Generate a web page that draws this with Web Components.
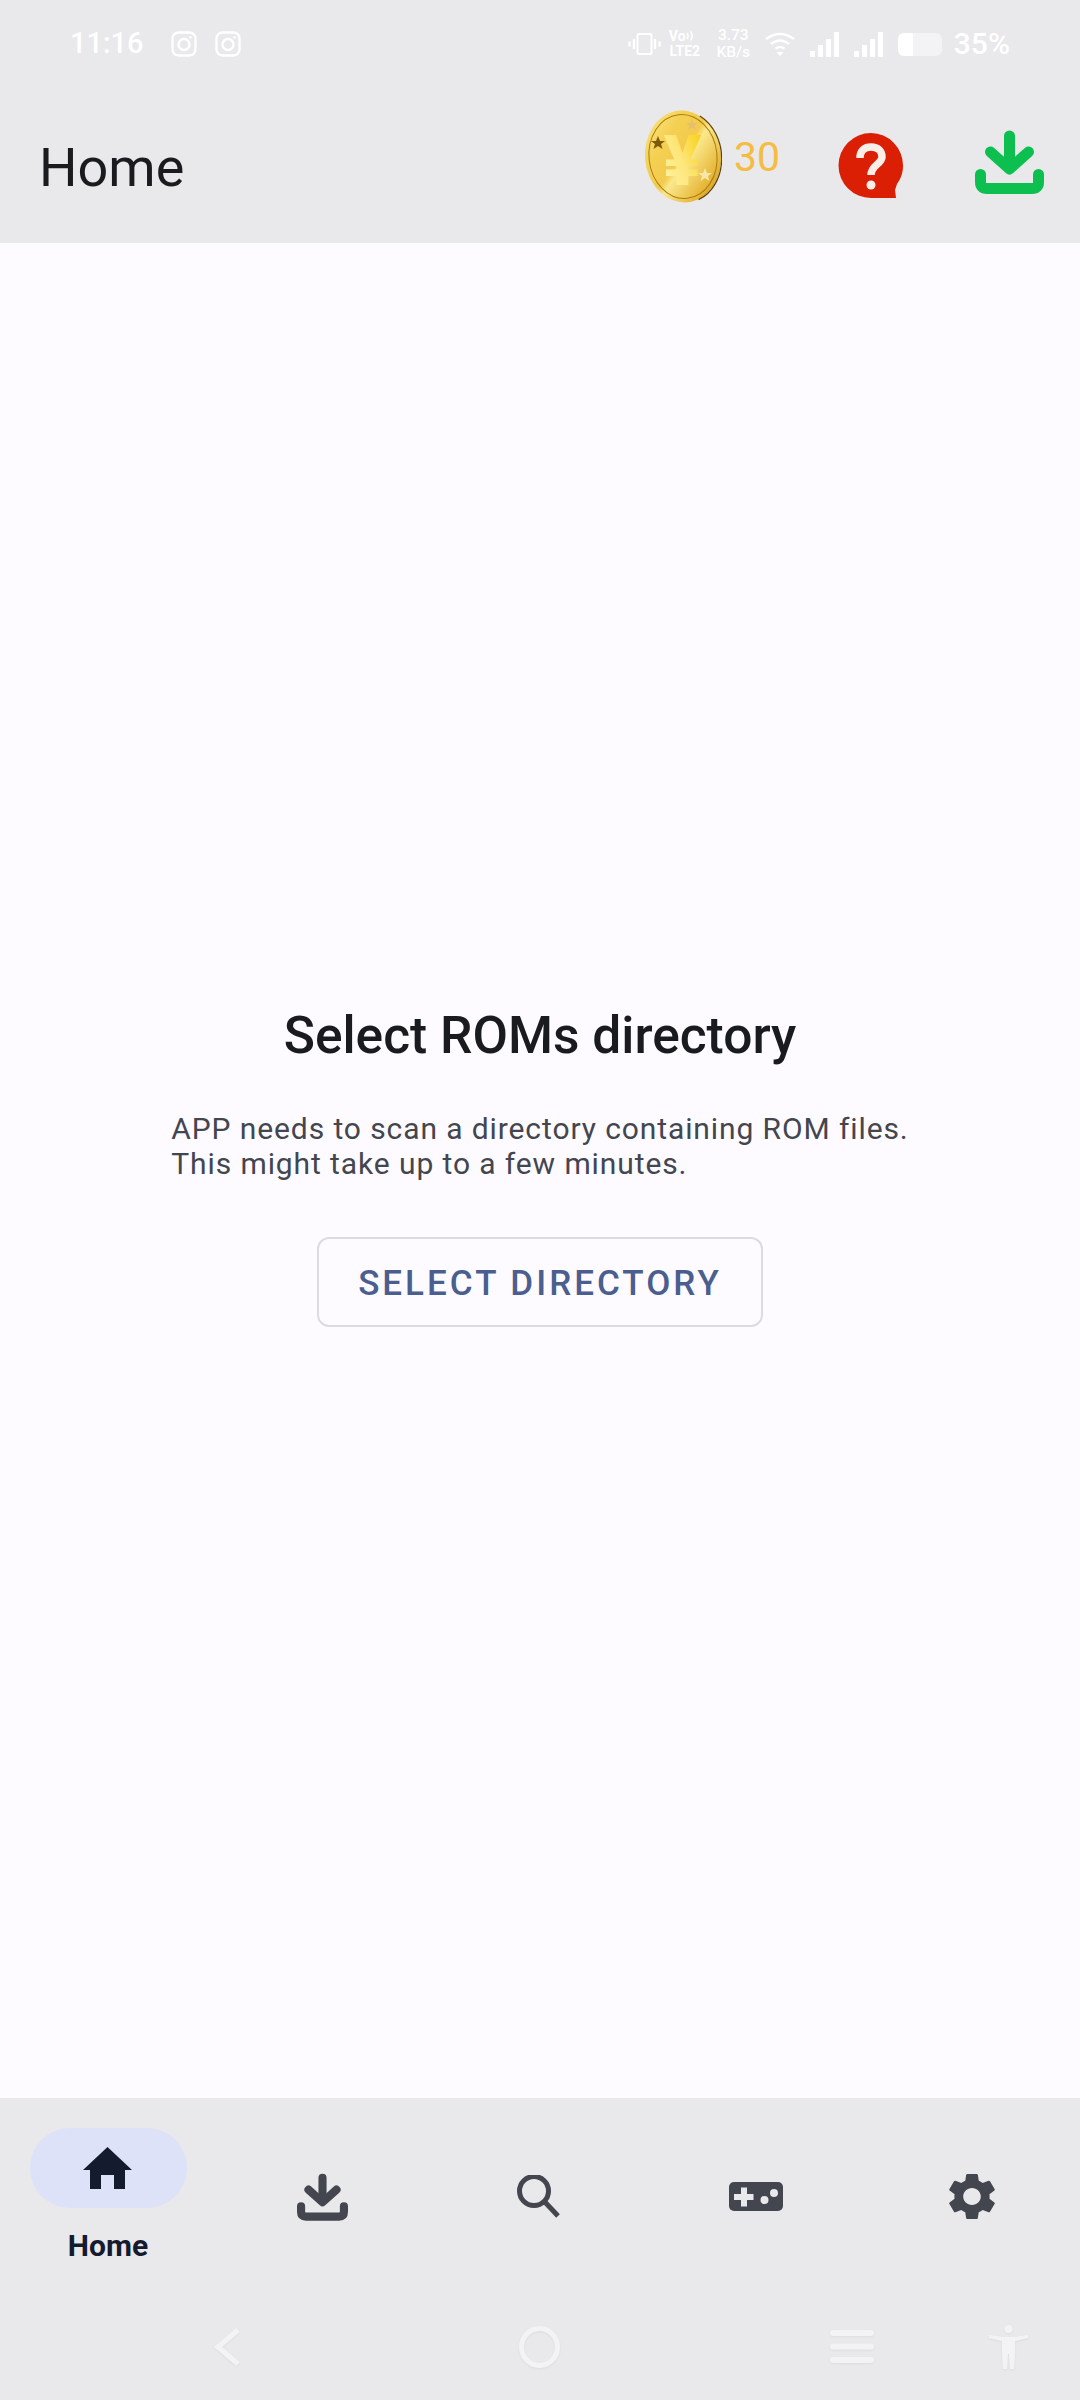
<!DOCTYPE html>
<html>
<head>
<meta charset="utf-8">
<title>Home</title>
<style>
html, body { margin: 0; padding: 0; }
body { width: 1080px; height: 2400px; background: #fdfbff; font-family: Roboto, "Liberation Sans", sans-serif; }
main-page { height: 2400px; }
</style>
</head>
<body>
<main-page>
  <top-header slot="top" title-text="Home" coins="30"></top-header>
  <empty-state heading="Select ROMs directory" action="SELECT DIRECTORY">
    APP needs to scan a directory containing ROM files.<br>This might take up to a few minutes.
  </empty-state>
  <bottom-area slot="bottom">
    <nav-item icon="home" label="Home" active></nav-item>
    <nav-item icon="download"></nav-item>
    <nav-item icon="search"></nav-item>
    <nav-item icon="gamepad"></nav-item>
    <nav-item icon="settings"></nav-item>
  </bottom-area>
</main-page>

<script>
"use strict";
const GEAR = "M19.14 12.94c.04-.3.06-.61.06-.94 0-.32-.02-.64-.07-.94l2.03-1.58c.18-.14.23-.41.12-.61l-1.92-3.32c-.12-.22-.37-.29-.59-.22l-2.39.96c-.5-.38-1.03-.7-1.62-.94l-.36-2.54c-.04-.24-.24-.41-.48-.41h-3.84c-.24 0-.43.17-.47.41l-.36 2.54c-.59.24-1.13.57-1.62.94l-2.39-.96c-.22-.08-.47 0-.59.22L2.74 8.87c-.12.21-.08.47.12.61l2.03 1.58c-.05.3-.09.63-.09.94s.02.64.07.94l-2.03 1.58c-.18.14-.23.41-.12.61l1.92 3.32c.12.22.37.29.59.22l2.39-.96c.5.38 1.03.7 1.62.94l.36 2.54c.05.24.24.41.48.41h3.84c.24 0 .44-.17.47-.41l.36-2.54c.59-.24 1.13-.56 1.62-.94l2.39.96c.22.08.47 0 .59-.22l1.92-3.32c.12-.22.07-.47-.12-.61l-2.01-1.58zM12 15.6c-1.98 0-3.6-1.62-3.6-3.6s1.62-3.6 3.6-3.6 3.6 1.62 3.6 3.6-1.62 3.6-3.6 3.6z";

function downloadSvg(w, h, color, extra = "") {
    return `<svg ${extra} width="${w}" height="${h}" viewBox="0 0 69 64" fill="none" stroke="${color}" stroke-width="11" stroke-linecap="round" stroke-linejoin="round">
        <path d="M34.500 6V36"/><path d="M15.500 22L34.500 39L53.500 22"/>
        <path d="M5.500 44.500V52Q5.500 58.500 12 58.500H57Q63.500 58.500 63.500 52V44.500"/>
    </svg>`;
}

const NAV_ICONS = {
    home: `<svg style="margin-left:-2px" width="49" height="42" viewBox="0 0 49 42"><path fill="#141b2f" d="M24.500 0L49 23H42V42H31V28H18V42H7V23H0Z"/></svg>`,
    download: downloadSvg(51, 48, "#44464f", 'style="margin-left:-3px"'),
    search: `<svg style="margin-left:-3px" width="43" height="43" viewBox="0 0 43 43" fill="none" stroke="#44464f" stroke-width="5"><circle cx="17" cy="16" r="14.500"/><path d="M27 26L41 41"/></svg>`,
    gamepad: `<svg width="54" height="29" viewBox="0 0 54 29"><rect width="54" height="29" rx="5" fill="#44464f"/><path fill="#e9e8eb" d="M12 5.500h6v6.500h6.500v6H18v6.500h-6V18H5v-6h7z"/><circle cx="35.500" cy="18" r="4" fill="#e9e8eb"/><circle cx="45" cy="11" r="4" fill="#e9e8eb"/></svg>`,
    settings: `<svg width="46" height="47" viewBox="2.600 2 18.800 20" preserveAspectRatio="none"><path fill="#44464f" d="${GEAR}"/></svg>`
};

class MainPage extends HTMLElement {
    constructor() {
        super();
        this.attachShadow({ mode: "open" });
        this.shadowRoot.innerHTML = `
        <style>
        :host { display: flex; flex-direction: column; width: 1080px; }
        .middle { flex: 1; display: flex; min-height: 0; }
        </style>
        <slot name="top"></slot>
        <div class="middle"><slot></slot></div>
        <slot name="bottom"></slot>
        `;
    }
}
customElements.define("main-page", MainPage);

class StatusBar extends HTMLElement {
    constructor() {
        super();
        this.attachShadow({ mode: "open" });
        const insta = `<svg width="26" height="26" viewBox="0 0 26 26" fill="none" stroke="#fff" stroke-width="2.400"><rect x="1.500" y="1.500" width="23" height="23" rx="6"/><circle cx="13" cy="13.500" r="5.500"/><circle cx="19.500" cy="6.500" r="1.300" fill="#fff" stroke="none"/></svg>`;
        const signal = `<svg width="29" height="25" viewBox="0 0 29 25" fill="#fff"><rect y="19" width="5" height="6"/><rect x="8" y="13" width="5" height="12"/><rect x="16" y="7" width="5" height="18"/><rect x="24" y="0" width="5" height="25"/></svg>`;
        this.shadowRoot.innerHTML = `
        <style>
        :host { display: flex; justify-content: space-between; align-items: center; height: 88px; padding: 0 70px; color: #fff; }
        .side { display: flex; align-items: center; }
        svg { display: block; }
        .time { font-size: 29px; font-weight: 500; margin-right: 27px; position: relative; top: -1px; }
        .gap { width: 18px; }
        .stack { font-weight: 500; text-align: center; white-space: nowrap; }
        .volte { font-size: 14px; line-height: 15.500px; font-weight: 700; width: 32px; margin: 0 15px 0 8px; }
        .volte span { display: flex; align-items: center; }
        .speed { font-size: 15.500px; line-height: 17px; width: 35px; margin-right: 14px; }
        .wifi { margin-right: 15px; }
        .sig { margin-right: 15px; }
        .pct { font-size: 30px; font-weight: 500; margin-left: 12px; position: relative; top: -1px; }
        </style>
        <div class="side">
            <span class="time">11:16</span>${insta}<span class="gap"></span>${insta}
        </div>
        <div class="side">
            <svg width="33" height="22" viewBox="0 0 33 22" fill="none" stroke="#fff" stroke-width="2.400"><rect x="9.500" y="1" width="14" height="20" rx="1.500" stroke-width="2"/><path d="M6 6V16M1.500 8.500V13.500M27 6V16M31.500 8.500V13.500"/></svg>
            <div class="stack volte"><span>Vo<svg width="10" height="12" viewBox="0 0 10 12" fill="none" stroke="#fff" stroke-width="1.600"><path d="M1 3Q3 6 1 9M4.500 1.500Q8 6 4.500 10.500"/></svg></span>LTE2</div>
            <div class="stack speed">3.73<br>KB/s</div>
            <svg class="wifi" width="30" height="24" viewBox="0 0 30 24" fill="none" stroke="#fff" stroke-width="2.600"><path d="M1 7Q15 -3 29 7M6 12Q15 5 24 12M10.500 16.500Q15 13.500 19.500 16.500"/><path fill="#fff" stroke="none" d="M11.500 20H18.500L15 24Z"/></svg>
            <span class="sig">${signal}</span><span class="sig">${signal}</span>
            <svg width="44" height="23" viewBox="0 0 44 23"><rect width="44" height="23" rx="6" fill="#fff" opacity=".45"/><path fill="#fff" d="M6 0H15V23H6A6 6 0 0 1 0 17V6A6 6 0 0 1 6 0Z"/></svg>
            <span class="pct">35%</span>
        </div>
        `;
    }
}
customElements.define("status-bar", StatusBar);

class TopHeader extends HTMLElement {
    constructor() {
        super();
        this.attachShadow({ mode: "open" });
    }
    connectedCallback() {
        this.shadowRoot.innerHTML = `
        <style>
        :host { display: block; height: 243px; background: #e9e8eb; }
        .bar { display: flex; align-items: center; height: 155px; padding: 0 36px 0 39px; }
        h1 { flex: 1; margin: 3px 0 0; font-size: 54px; font-weight: 400; color: #1a1b1f; }
        svg { display: block; }
        .coin { margin-bottom: 18px; }
        .coins { font-size: 41px; color: #f5bc42; margin: 0 62px 17px 12px; width: 42px; }
        .help { margin-right: 71px; }
        .dl { margin-bottom: 7px; }
        </style>
        <status-bar></status-bar>
        <div class="bar">
            <h1>${this.getAttribute("title-text")}</h1>
            <svg class="coin" width="78" height="93" viewBox="0 0 78 93">
                <defs>
                    <linearGradient id="gold" x1="0" y1="0" x2="1" y2="1">
                        <stop offset="0" stop-color="#fbe98c"/><stop offset=".3" stop-color="#f4d052"/><stop offset=".48" stop-color="#f2ca4e"/><stop offset=".54" stop-color="#fbe88c"/><stop offset=".8" stop-color="#e6b536"/><stop offset="1" stop-color="#b98512"/>
                    </linearGradient>
                    <linearGradient id="yen" x1="0" y1="1" x2="1" y2="0">
                        <stop offset="0" stop-color="#fff6b0"/><stop offset=".5" stop-color="#fde67a"/><stop offset="1" stop-color="#f8cc00"/>
                    </linearGradient>
                </defs>
                <g transform="rotate(-6 39 46.500)">
                    <ellipse cx="39" cy="46.500" rx="38" ry="46" fill="url(#gold)"/>
                    <path d="M60 8A38 46 0 0 1 50 91" fill="none" stroke="#5c4208" stroke-width="1.200"/>
                    <ellipse cx="39" cy="46.500" rx="34" ry="42" fill="none" stroke="#a87b10" stroke-width="1"/>
                </g>
                <text x="38.500" y="75" text-anchor="middle" font-family="Roboto, sans-serif" font-weight="900" font-size="70" fill="url(#yen)">¥</text>
                <path fill="#7d5a08" d="M14 26l2 5 5 0-4 3 1.500 5-4.500-3-4.500 3 1.500-5-4-3 5 0z"/>
                <path fill="#e4c068" d="M48 9l1.600 4 4.400 0-3.500 2.600 1.300 4.400-3.800-2.600-3.800 2.600 1.300-4.400-3.500-2.600 4.400 0z"/>
                <path fill="#f8e6a8" d="M61 58l2 5 5 0-4 3 1.500 5-4.500-3-4.500 3 1.500-5-4-3 5 0z"/>
            </svg>
            <span class="coins">${this.getAttribute("coins")}</span>
            <svg class="help" width="66" height="66" viewBox="0 0 66 66">
                <path fill="#da1f05" d="M33 0A32.500 32.500 0 0 1 65 32.500C65 40 63 45 59 51L57 57L58 65H33A32.500 32.500 0 0 1 33 0Z"/>
                <path fill="none" stroke="#fbeee8" stroke-width="7.500" d="M22 25C22 17 27 14 33 14C40 14 44 18 44 24C44 31 33 32 33 42"/>
                <circle cx="33" cy="52" r="4.500" fill="#fbeee8"/>
            </svg>
            ${downloadSvg(69, 64, "#0cbf4f", 'class="dl"')}
        </div>
        `;
    }
}
customElements.define("top-header", TopHeader);

class EmptyState extends HTMLElement {
    constructor() {
        super();
        this.attachShadow({ mode: "open" });
    }
    connectedCallback() {
        this.shadowRoot.innerHTML = `
        <style>
        :host { flex: 1; display: flex; flex-direction: column; align-items: center; justify-content: center; padding-bottom: 8px; }
        h2 { margin: 0 0 45px; font-size: 51.500px; line-height: 60px; font-weight: 500; color: #1a1b1f; }
        p { margin: 0 0 56px; font-size: 30px; line-height: 35px; letter-spacing: .9px; color: #44464f; }
        button { font: 500 35px Roboto, sans-serif; letter-spacing: 3px; color: #4a5f8f; background: none; width: 446px; height: 90px; border: 2px solid #dcdce0; border-radius: 12px; padding: 2px 0 0; }
        </style>
        <h2>${this.getAttribute("heading")}</h2>
        <p><slot></slot></p>
        <button>${this.getAttribute("action")}</button>
        `;
    }
}
customElements.define("empty-state", EmptyState);

class NavItem extends HTMLElement {
    constructor() {
        super();
        this.attachShadow({ mode: "open" });
    }
    connectedCallback() {
        const label = this.getAttribute("label");
        this.shadowRoot.innerHTML = `
        <style>
        :host { display: flex; flex-direction: column; align-items: center; justify-content: center; }
        .icon { display: flex; align-items: center; justify-content: center; height: 80px; width: 157px; border-radius: 40px; }
        :host([active]) .icon { background: #dde2f9; }
        svg { display: block; }
        .label { margin-top: 19px; font-size: 30px; line-height: 38px; font-weight: 700; color: #141b2f; }
        </style>
        <div class="icon">${NAV_ICONS[this.getAttribute("icon")]}</div>
        ${label ? `<div class="label">${label}</div>` : ""}
        `;
    }
}
customElements.define("nav-item", NavItem);

class SystemNav extends HTMLElement {
    constructor() {
        super();
        this.attachShadow({ mode: "open" });
        this.shadowRoot.innerHTML = `
        <style>
        :host { display: flex; align-items: center; height: 105px; padding: 0 52px 2px 214px; box-sizing: border-box; }
        svg { display: block; flex: none; filter: drop-shadow(0 1px 1px rgba(0,0,0,.05)); }
        </style>
        <svg width="26" height="38" viewBox="0 0 26 38" fill="none" stroke="#f3f3f5" stroke-width="5"><path d="M24 2L4 19L24 36"/></svg>
        <svg style="margin-left:279px" width="41" height="42" viewBox="0 0 41 42" fill="none" stroke="#f3f3f5" stroke-width="5"><ellipse cx="20.500" cy="21" rx="18" ry="18.500"/></svg>
        <svg style="margin-left:270px" width="44" height="33" viewBox="0 0 44 33" fill="#f3f3f5"><rect width="44" height="6" rx="3"/><rect y="13.500" width="44" height="6" rx="3"/><rect y="27" width="44" height="6" rx="3"/></svg>
        <svg style="margin-left:115px" width="39" height="44" viewBox="0 0 39 44" fill="#f3f3f5"><circle cx="19.500" cy="4" r="4"/><path d="M0 10L14 12H25L39 10V13L26 16V27L25 44H21L20 29H19L18 44H14L13 27V16L0 13Z"/></svg>
        `;
    }
}
customElements.define("system-nav", SystemNav);

class BottomArea extends HTMLElement {
    constructor() {
        super();
        this.attachShadow({ mode: "open" });
        this.shadowRoot.innerHTML = `
        <style>
        :host { display: block; background: #e9e8eb; }
        .tabs { display: grid; grid-template-columns: repeat(5, 1fr); height: 197px; }
        </style>
        <div class="tabs"><slot></slot></div>
        <system-nav></system-nav>
        `;
    }
}
customElements.define("bottom-area", BottomArea);
</script>
</body>
</html>
